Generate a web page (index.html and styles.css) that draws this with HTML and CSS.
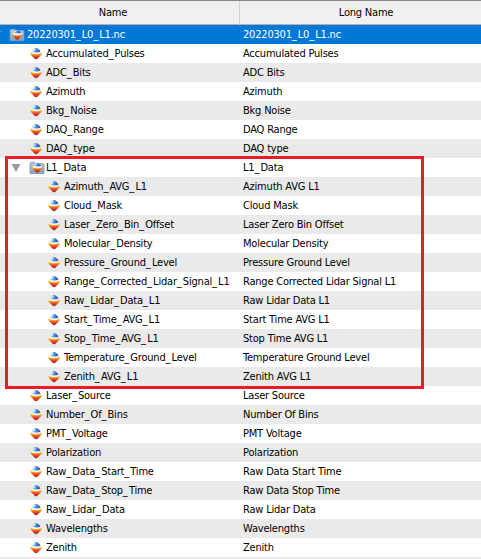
FILE: index.html
```html
<!DOCTYPE html>
<html lang="en">
<head>
<meta charset="utf-8">
<title>Dataset variables</title>
<link rel="stylesheet" href="styles.css">
</head>
<body>
<svg class="defs" width="0" height="0">
  <defs>
    <linearGradient id="lower" x1="0" y1="0" x2="0" y2="1">
      <stop offset="0" stop-color="#fff3a0"/><stop offset=".3" stop-color="#ffd02e"/>
      <stop offset=".5" stop-color="#f4732a"/><stop offset=".75" stop-color="#df3423"/>
      <stop offset="1" stop-color="#b02a2a"/>
    </linearGradient>
    <linearGradient id="upper" x1="0" y1="0" x2="1" y2="0">
      <stop offset="0" stop-color="#a9d8f8"/><stop offset=".4" stop-color="#5a9de8"/>
      <stop offset="1" stop-color="#26389a"/>
    </linearGradient>
    <linearGradient id="shell" x1="0" y1="0" x2="0" y2="1">
      <stop offset="0" stop-color="#b9cbdc"/><stop offset="1" stop-color="#86a3be"/>
    </linearGradient>
    <symbol id="gem" viewBox="0 0 14 14">
      <path d="M7.5 1.6 13.4 7.3 7.5 13 1.8 7.3Z" fill="#667" opacity=".35"/>
      <path d="M1.2 6.2Q1.5 5.2 2.8 4.4L11 4.2Q12.7 5.4 12.8 6.4Q12 8 8.6 11.4Q7 12.6 5.4 11.4Q1.6 8 1.2 6.2Z" fill="url(#lower)"/>
      <path d="M2.1 5.5Q4 2.8 5.2 1.6Q7 .3 8.8 1.6Q10.5 2.9 12 5.5Q10 7.3 7 7.3T2.1 5.5Z" fill="#edf8fa"/>
      <path d="M3.2 4.2Q4.3 2.3 5.5 1.5Q7 .5 8.6 1.5Q10.3 2.6 11.5 4.5Q9.7 5.4 7.3 5.4T3.2 4.2Z" fill="url(#upper)"/>
      <path d="M4.4 3.8 6.2 2" stroke="#e4f4ff" stroke-width="1.1"/>
    </symbol>
    <symbol id="folder" viewBox="0 0 16 14">
      <path d="M1 2.8Q1 1.2 2.2 1.2H5.5L7 2.6H14Q15 2.6 15 3.6V12.7H1Z" fill="url(#shell)" stroke="#8298ad" stroke-width=".8"/>
      <use href="#gem" x="2" y=".8" width="12.5" height="12.5"/>
    </symbol>
  </defs>
</svg>
<div class="table">
  <div class="header"><div class="th">Name</div><div class="th">Long Name</div></div>
  <div class="rows" id="rows"></div>
  <div class="highlight"></div>
</div>
<script src="rows.js"></script>
</body>
</html>
```
FILE: styles.css
```css
body { margin: 0; background: #fff; overflow: hidden; }
.defs { position: absolute; }
.table {
  position: relative; width: 481px; height: 559px; overflow: hidden;
  font-family: "DejaVu Sans Condensed", "DejaVu Sans", sans-serif;
  font-stretch: condensed; font-size: 11px; letter-spacing: -0.2px; color: #000;
}
.header {
  box-sizing: border-box; display: grid; grid-template-columns: 253px 253px;
  width: 506px; height: 25px; margin-left: -13px;
  border-top: 1px solid #858585; border-bottom: 1px solid #b0b0b0; background: #f0f0f0;
}
.th { box-sizing: border-box; text-align: center; line-height: 24px; border-right: 1px solid #d2d2d2; }
.row { display: grid; grid-template-columns: 243px 1fr; height: 19px; line-height: 19px; white-space: nowrap; }
.row:nth-child(odd) { background: #eaeaea; }
.row.selected { background: #0078d7; color: #fff; }
.name { display: flex; align-items: center; }
.name.var { padding-left: 29px; }
.name.group { padding-left: 11px; }
.name.child { padding-left: 47px; }
.us { letter-spacing: 1.1px; }
.gem { width: 14px; height: 14px; margin-right: 3px; flex: none; }
.folder { width: 16px; height: 14px; margin-right: 1px; flex: none; }
.arrow { width: 10px; height: 8px; margin-right: 8px; flex: none; }
.arrow.cut { width: 3px; margin-right: 6px; }
.root .folder { margin-right: 2px; }
.highlight {
  position: absolute; left: 5px; top: 156px; width: 419px; height: 233px;
  box-sizing: border-box; border: 3px solid #ed1c24;
}
```
FILE: rows.js
```js
const rows = [
  ["root", "20220301_L0_L1.nc"],
  ["var", "Accumulated_Pulses"], ["var", "ADC_Bits"], ["var", "Azimuth"],
  ["var", "Bkg_Noise"], ["var", "DAQ_Range"], ["var", "DAQ_type"],
  ["group", "L1_Data"],
  ["child", "Azimuth_AVG_L1"], ["child", "Cloud_Mask"], ["child", "Laser_Zero_Bin_Offset"],
  ["child", "Molecular_Density"], ["child", "Pressure_Ground_Level"],
  ["child", "Range_Corrected_Lidar_Signal_L1"], ["child", "Raw_Lidar_Data_L1"],
  ["child", "Start_Time_AVG_L1"], ["child", "Stop_Time_AVG_L1"],
  ["child", "Temperature_Ground_Level"], ["child", "Zenith_AVG_L1"],
  ["var", "Laser_Source"], ["var", "Number_Of_Bins"], ["var", "PMT_Voltage"],
  ["var", "Polarization"], ["var", "Raw_Data_Start_Time"], ["var", "Raw_Data_Stop_Time"],
  ["var", "Raw_Lidar_Data"], ["var", "Wavelengths"], ["var", "Zenith"], ["end", ""]
];
const spaced = text => text.replace(/_/g, '<span class="us">_</span>');
const arrows = {
  root: '<svg class="arrow cut" viewBox="0 0 3 8"><path d="M0 0h1L0 2Z" fill="#999"/></svg>',
  group: '<svg class="arrow" viewBox="0 0 10 8"><path d="M0.5 0h9L5 8Z" fill="#999"/></svg>'
};
document.getElementById("rows").innerHTML = rows.map(([kind, name]) => {
  const container = kind === "root" || kind === "group";
  const longName = container ? spaced(name) : name.replace(/_/g, " ");
  const icon = kind === "end" ? "" : container
    ? '<svg class="folder"><use href="#folder"/></svg>'
    : '<svg class="gem"><use href="#gem"/></svg>';
  return `<div class="row ${kind === "root" ? "selected" : ""}"><div class="name ${kind}">${arrows[kind] || ""}${icon}<span>${spaced(name)}</span></div><div>${longName}</div></div>`;
}).join("");
```
